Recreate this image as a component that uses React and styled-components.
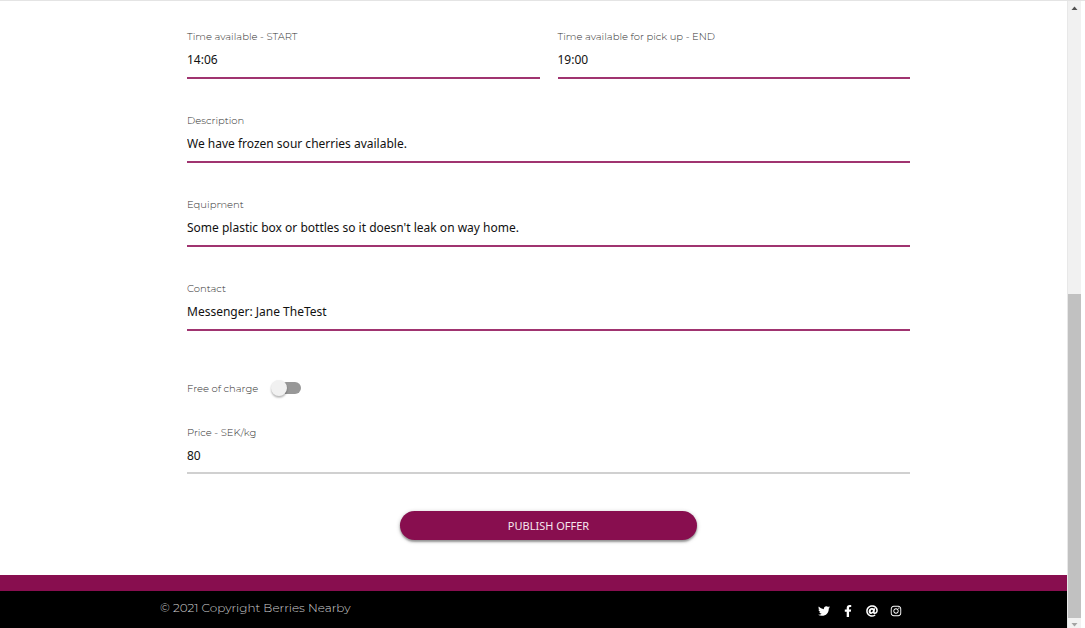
import React from "react";
import styled, { createGlobalStyle } from "styled-components";
import { FaTwitter, FaFacebookF, FaAt, FaInstagram } from "react-icons/fa";

const wine = "#880e4f";
const labelFont = `Montserrat, Inter, sans-serif`;
const textFont = `"Noto Sans", "Open Sans", sans-serif`;

const GlobalStyle = createGlobalStyle`
  * { box-sizing: border-box; }
  body { margin: 0; background: #fff; overflow: hidden; }
`;

const Viewport = styled.div`
  display: flex;
  height: 100vh;
  padding-right: 4px;
  border-top: 1px solid #e4e4e4;
`;

const Page = styled.div`
  flex: 1;
  min-width: 0;
  display: flex;
  flex-direction: column;
`;

const Form = styled.form`
  flex: 1;
  display: flex;
  flex-direction: column;
  gap: 33px;
  padding: 27px 157px 0 187px;
`;

const FieldRow = styled.div`
  display: grid;
  grid-template-columns: 1fr 1fr;
  column-gap: 18px;
`;

const FieldBox = styled.div`
  display: flex;
  flex-direction: column;
`;

const Label = styled.label`
  font: 300 10px/18px ${labelFont};
  height: 16px;
  color: #333;
`;

const Input = styled.input`
  width: 100%;
  padding: 0 0 ${(p) => (p.$valid ? "3px" : "2px")};
  border: 0;
  border-bottom: 2px solid ${(p) => (p.$valid ? "#a03470" : "#d0d0d0")};
  border-radius: 0;
  outline: 0;
  background: transparent;
  color: #111;
  font: 400 12px/30px ${textFont};
  height: ${(p) => (p.$valid ? "35px" : "34px")};
`;

const SwitchRow = styled.div`
  display: flex;
  align-items: center;
  gap: 14px;
  height: 16px;
  margin-top: 16px;
`;

const Switch = styled.input`
  appearance: none;
  display: flex;
  align-items: center;
  width: 29px;
  height: 12px;
  margin: 0;
  border-radius: 6px;
  background: #989898;

  &::before {
    content: "";
    width: 16px;
    height: 16px;
    flex: none;
    margin-left: -1px;
    border-radius: 50%;
    background: #f1f1f1;
    box-shadow: 0 2px 2px rgba(0, 0, 0, 0.18), 0 1px 2px rgba(0, 0, 0, 0.15);
  }
  &:checked::before { margin-left: 14px; }
`;

const PriceGroup = styled.div`
  display: flex;
  flex-direction: column;
  gap: 28px;
`;

const PublishButton = styled.button`
  align-self: center;
  width: 41%;
  height: 29px;
  margin-top: 4px;
  padding: 0;
  border: 0;
  border-radius: 15px;
  background: ${wine};
  color: #f6e6ee;
  font: 400 11px/29px ${textFont};
  text-transform: uppercase;
  box-shadow: 0 2px 2px rgba(0, 0, 0, 0.3), 0 1px 4px rgba(0, 0, 0, 0.25);
`;

const Footer = styled.footer`
  border-top: 16px solid ${wine};
  background: #000;
`;

const FooterInner = styled.div`
  display: flex;
  justify-content: space-between;
  width: 70%;
  height: 37px;
  margin: 0 auto;
  padding: 8px 5px 0 0;
`;

const Copyright = styled.span`
  font: 300 12px/18px ${labelFont};
  color: #d0d0d0;
`;

const Social = styled.nav`
  display: flex;
  gap: 12px;
  padding-top: 6px;
`;

const SocialLink = styled.a`
  display: flex;
  justify-content: center;
  width: 12px;
  height: 12px;
  color: #fff;
  font-size: 12px;
`;

const Scrollbar = styled.div`
  display: grid;
  grid-template-rows: 12px 281fr 324fr 10px;
  width: 14px;
  background: #f1f1f1;
  border-left: 1px solid #e8e8e8;
`;

const Arrow = styled.svg`
  display: block;
  width: 13px;
  height: 10px;
  fill: ${(p) => p.$color};
`;

const Thumb = styled.div`
  grid-row: 3;
  background: #c1c1c1;
`;

function Field({ id, label, value, valid = true }) {
  return (
    <FieldBox>
      <Label htmlFor={id}>{label}</Label>
      <Input id={id} defaultValue={value} $valid={valid} />
    </FieldBox>
  );
}

export default function App() {
  return (
    <Viewport>
      <GlobalStyle />
      <Page>
        <Form onSubmit={(e) => e.preventDefault()}>
          <FieldRow>
            <Field id="start" label="Time available - START" value="14:06" />
            <Field id="end" label="Time available for pick up - END" value="19:00" />
          </FieldRow>
          <Field id="description" label="Description" value="We have frozen sour cherries available." />
          <Field
            id="equipment"
            label="Equipment"
            value="Some plastic box or bottles so it doesn't leak on way home."
          />
          <Field id="contact" label="Contact" value="Messenger: Jane TheTest" />
          <PriceGroup>
            <SwitchRow>
              <Label htmlFor="free">Free of charge</Label>
              <Switch id="free" type="checkbox" role="switch" />
            </SwitchRow>
            <Field id="price" label="Price - SEK/kg" value="80" valid={false} />
          </PriceGroup>
          <PublishButton type="submit">Publish offer</PublishButton>
        </Form>
        <Footer>
          <FooterInner>
            <Copyright>© 2021 Copyright Berries Nearby</Copyright>
            <Social>
              <SocialLink href="#twitter" aria-label="Twitter"><FaTwitter /></SocialLink>
              <SocialLink href="#facebook" aria-label="Facebook"><FaFacebookF /></SocialLink>
              <SocialLink href="#email" aria-label="Email"><FaAt /></SocialLink>
              <SocialLink href="#instagram" aria-label="Instagram"><FaInstagram /></SocialLink>
            </Social>
          </FooterInner>
        </Footer>
      </Page>
      <Scrollbar aria-hidden="true">
        <Arrow viewBox="0 0 13 10" $color="#505050"><path d="M3.5 9 6.5 5.5 9.5 9z" /></Arrow>
        <span />
        <Thumb />
        <Arrow viewBox="0 0 13 10" $color="#a3a3a3"><path d="M3.5 5 6.5 8.5 9.5 5z" /></Arrow>
      </Scrollbar>
    </Viewport>
  );
}
